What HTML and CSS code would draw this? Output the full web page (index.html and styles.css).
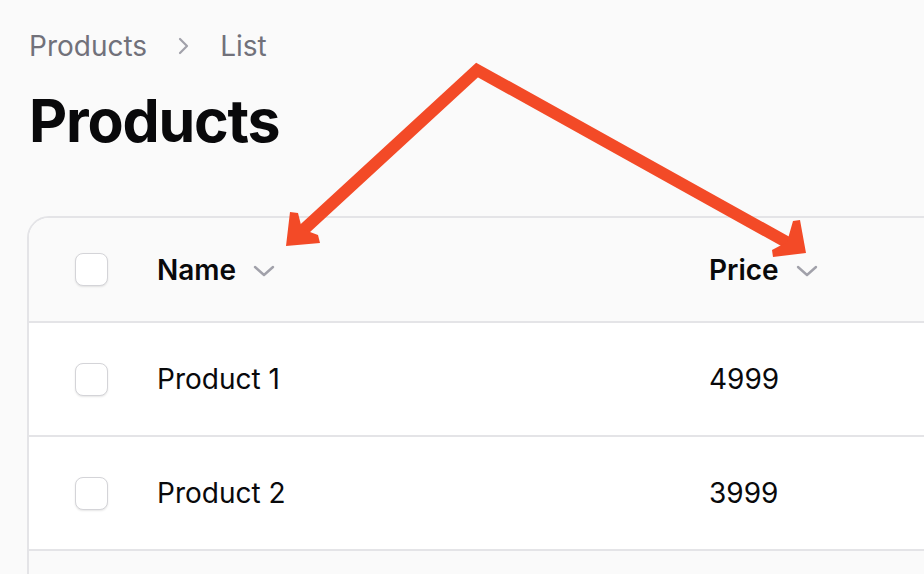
FILE: index.html
```html
<!DOCTYPE html>
<html lang="en">
<head>
<meta charset="utf-8">
<title>Products</title>
<link rel="stylesheet" href="styles.css">
</head>
<body>
<div class="page">
  <nav class="breadcrumb">
    <span class="crumb">Products</span>
    <svg class="crumb-sep" width="14" height="20" viewBox="0 0 14 20"><path d="M3 3 L10 10 L3 17" fill="none" stroke="#a1a1aa" stroke-width="2.2" stroke-linecap="round" stroke-linejoin="round"/></svg>
    <span class="crumb">List</span>
  </nav>
  <h1 class="title">Products</h1>
  <div class="card">
    <div class="row head">
      <div class="cell check"><span class="box"></span></div>
      <div class="cell name"><span class="label">Name</span><svg class="sort" width="22" height="12" viewBox="0 0 22 12"><path d="M2 2 L11 10 L20 2" fill="none" stroke="#a1a1aa" stroke-width="2.4" stroke-linecap="round" stroke-linejoin="round"/></svg></div>
      <div class="cell price"><span class="label">Price</span><svg class="sort" width="22" height="12" viewBox="0 0 22 12"><path d="M2 2 L11 10 L20 2" fill="none" stroke="#a1a1aa" stroke-width="2.4" stroke-linecap="round" stroke-linejoin="round"/></svg></div>
    </div>
    <div class="row body">
      <div class="cell check"><span class="box"></span></div>
      <div class="cell name">Product 1</div>
      <div class="cell price">4999</div>
    </div>
    <div class="row body">
      <div class="cell check"><span class="box"></span></div>
      <div class="cell name">Product 2</div>
      <div class="cell price">3999</div>
    </div>
    <div class="footer"></div>
  </div>
</div>
<svg class="arrows" width="924" height="574" viewBox="0 0 924 574">
  <polyline points="300,233 477,70 790,244" fill="none" stroke="#f34a27" stroke-width="12" stroke-linejoin="miter" stroke-miterlimit="10"/>
  <polygon points="286,246 290,212 298,213 302,229 318,235 320,243" fill="#f34a27"/>
  <polygon points="806,253 773,257 772,250 787,242 793,221 800,220" fill="#f34a27"/>
</svg>
</body>
</html>
```

FILE: styles.css
```css
html, body {
  margin: 0;
  padding: 0;
  width: 924px;
  height: 574px;
  overflow: hidden;
}
body {
  background: #fafafa;
  font-family: Inter, "Noto Sans", sans-serif;
  color: #09090b;
  position: relative;
}
.page {
  padding: 26px 0 0 29px;
}
.breadcrumb {
  display: flex;
  align-items: center;
  height: 40px;
  font-size: 28px;
  color: #71717a;
}
.crumb-sep {
  margin: 0 29px 0 30px;
}
.title {
  margin: 19px 0 0 0;
  font-size: 59px;
  line-height: 72px;
  font-weight: 700;
  letter-spacing: -0.02em;
  color: #09090b;
}
.card {
  margin-top: 59px;
  margin-left: -2px;
  width: 1200px;
  border: 2px solid #e4e4e7;
  border-radius: 22px;
  background: #ffffff;
  overflow: hidden;
}
.row {
  display: flex;
  align-items: center;
  border-bottom: 2px solid #e4e4e7;
}
.row.head {
  height: 103px;
  background: #fafafa;
}
.row.body {
  height: 112px;
  background: #ffffff;
  font-size: 28px;
}
.cell.check {
  width: 34px;
  padding-left: 46px;
  padding-right: 48px;
  display: flex;
}
.box {
  width: 31px;
  height: 31px;
  border: 1.5px solid #d4d4d8;
  border-radius: 8px;
  background: #ffffff;
  box-shadow: 0 1px 2px rgba(0,0,0,0.1);
}
.cell.name {
  width: 552px;
  display: flex;
  align-items: center;
}
.cell.price {
  display: flex;
  align-items: center;
}
.head .cell {
  font-size: 28px;
  font-weight: 600;
}
.sort {
  margin-left: 17px;
  margin-top: 2px;
}
.footer {
  height: 60px;
  background: #fafafa;
}
.arrows {
  position: absolute;
  top: 0;
  left: 0;
  pointer-events: none;
}
```
